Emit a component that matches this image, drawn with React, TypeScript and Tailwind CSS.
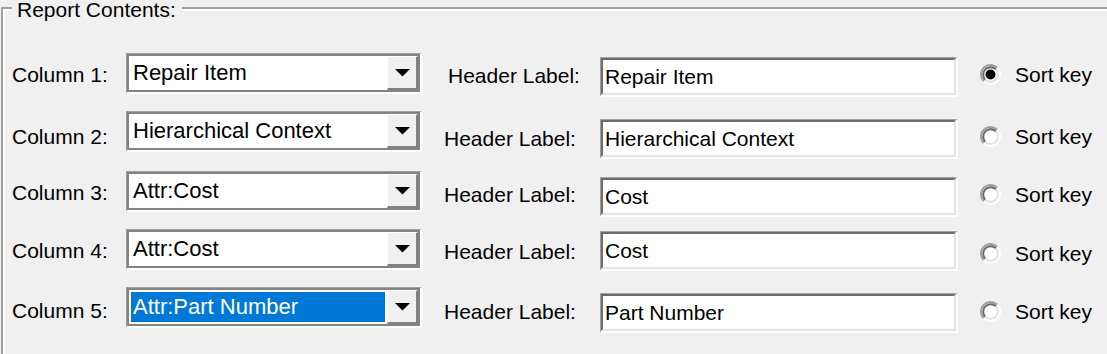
import React from "react";

type Row = {
  n: number;
  combo: string;
  header: string;
  checked: boolean;
  selected: boolean;
  h: string;
  labelMt: string;
  hdrCls: string;
  tfMt: string;
  sortMt: string;
};

const rows: Row[] = [
  { n: 1, combo: "Repair Item", header: "Repair Item", checked: true, selected: false, h: "h-[58px]", labelMt: "mt-[10px]", hdrCls: "ml-[26px] w-[152px] mt-[11px]", tfMt: "mt-[4px]", sortMt: "mt-[10px]" },
  { n: 2, combo: "Hierarchical Context", header: "Hierarchical Context", checked: false, selected: false, h: "h-[60px]", labelMt: "mt-[14px]", hdrCls: "ml-[22px] w-[156px] mt-[16px]", tfMt: "mt-[8px]", sortMt: "mt-[14px]" },
  { n: 3, combo: "Attr:Cost", header: "Cost", checked: false, selected: false, h: "h-[58px]", labelMt: "mt-[10px]", hdrCls: "ml-[22px] w-[156px] mt-[12px]", tfMt: "mt-[6px]", sortMt: "mt-[12px]" },
  { n: 4, combo: "Attr:Cost", header: "Cost", checked: false, selected: false, h: "h-[58px]", labelMt: "mt-[10px]", hdrCls: "ml-[22px] w-[156px] mt-[11px]", tfMt: "mt-[2px]", sortMt: "mt-[13px]" },
  { n: 5, combo: "Attr:Part Number", header: "Part Number", checked: false, selected: true, h: "h-[60px]", labelMt: "mt-[12px]", hdrCls: "ml-[22px] w-[156px] mt-[13px]", tfMt: "mt-[6px]", sortMt: "mt-[13px]" },
];

function Radio({ checked }: { checked: boolean }) {
  return (
    <svg width="21" height="21" viewBox="0 0 21 21" className="block mb-[2px]">
      <circle cx="10.5" cy="10.5" r="7" fill="#ffffff" />
      <path d="M3.75 17.25 A9.5 9.5 0 0 1 17.25 3.75" fill="none" stroke="#a0a0a0" strokeWidth="2" />
      <path d="M17.25 3.75 A9.5 9.5 0 0 1 3.75 17.25" fill="none" stroke="#ffffff" strokeWidth="2" />
      <path d="M5.2 15.8 A7.5 7.5 0 0 1 15.8 5.2" fill="none" stroke="#696969" strokeWidth="2" />
      <path d="M15.8 5.2 A7.5 7.5 0 0 1 5.2 15.8" fill="none" stroke="#e3e3e3" strokeWidth="2" />
      {checked && <circle cx="10.5" cy="10.5" r="5" fill="#000000" />}
    </svg>
  );
}

function Combo({ text, selected }: { text: string; selected: boolean }) {
  return (
    <div className="w-[296px] h-[41px] border-t border-l border-b-2 border-r-2 border-t-[#a0a0a0] border-l-[#a0a0a0] border-b-white border-r-white shrink-0">
      <div className="flex h-full border-2 border-[#838383] bg-white">
        <div className="flex-1 p-[2px] min-w-0">
          <div
            className={
              selected
                ? "h-full flex items-center pl-[2px] bg-[#0078d7] text-white whitespace-nowrap text-[22px]"
                : "h-full flex items-center pl-[2px] text-black whitespace-nowrap text-[22px]"
            }
          >
            {text}
          </div>
        </div>
        <div className="w-[31px] h-full bg-[#f0f0f0] border-t border-l border-t-white border-l-white border-b-2 border-r-2 border-b-[#808080] border-r-[#808080] flex items-center justify-center">
          <svg width="15" height="8" viewBox="0 0 15 8" className="block mt-[1px]">
            <polygon points="0,0 15,0 7.5,7.5" fill="#000000" />
          </svg>
        </div>
      </div>
    </div>
  );
}

function TextField({ text }: { text: string }) {
  return (
    <div className="w-[358px] h-[40px] border-t border-l border-b-2 border-r-2 border-t-[#a0a0a0] border-l-[#a0a0a0] border-b-white border-r-white shrink-0">
      <div className="h-full border-t-2 border-l-2 border-b-2 border-r-2 border-t-[#6d6d6d] border-l-[#6d6d6d] border-b-[#e3e3e3] border-r-[#e3e3e3] bg-white flex items-center pl-[2px] whitespace-nowrap">
        {text}
      </div>
    </div>
  );
}

export default function App() {
  return (
    <div
      className="w-[1107px] h-[354px] overflow-hidden bg-[#f0f0f0] text-black text-[21px] leading-[24px]"
      style={{ fontFamily: '"Liberation Sans", Arial, sans-serif' }}
    >
      <div className="relative mt-[7px] ml-[1px] border-t-2 border-l-2 border-[#a0a0a0]">
        <div className="absolute left-[9px] top-[-9px] pl-[5px] pr-[6px] bg-[#f0f0f0] whitespace-nowrap leading-[20px]">
          Report Contents:
        </div>
        <div className="h-[345px] border-t-2 border-l-2 border-white pt-[42px] pl-[7px]">
          {rows.map((r) => (
            <div key={r.n} className={`flex items-start ${r.h}`}>
              <div className={`w-[114px] shrink-0 whitespace-nowrap ${r.labelMt}`}>Column {r.n}:</div>
              <Combo text={r.combo} selected={r.selected} />
              <div className={`shrink-0 whitespace-nowrap ${r.hdrCls}`}>Header Label:</div>
              <div className={r.tfMt}>
                <TextField text={r.header} />
              </div>
              <div className={`flex items-center h-[24px] ml-[22px] ${r.sortMt}`}>
                <Radio checked={r.checked} />
                <span className="ml-[14px] whitespace-nowrap">Sort key</span>
              </div>
            </div>
          ))}
        </div>
      </div>
    </div>
  );
}
